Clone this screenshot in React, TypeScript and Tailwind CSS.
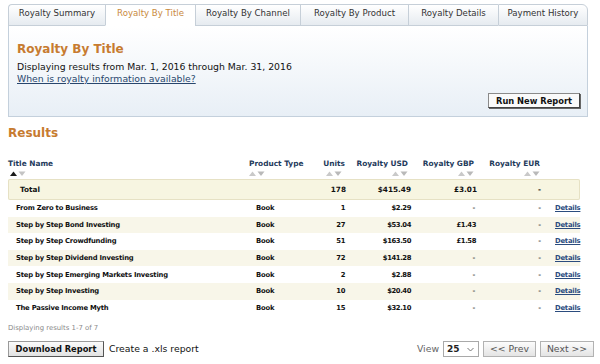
import React from "react";

const COLS = "grid grid-cols-[241px_66px_32px_64px_66px_65px_38px]";

function Arrows({ active }: { active?: boolean }) {
  return (
    <svg width="16" height="5" viewBox="0 0 16 5" className="block">
      <path d="M0 5L3.5 0.5L7 5Z" fill={active ? "#1a1a1a" : "#c9c9c9"} />
      <path d="M8.5 0.5H15.5L12 5Z" fill={active ? "#c4c4c4" : "#b9b9b9"} />
    </svg>
  );
}

const tabs = [
  { label: "Royalty Summary", w: "w-[97px]" },
  { label: "Royalty By Title", w: "w-[90px]", active: true },
  { label: "Royalty By Channel", w: "w-[105px]" },
  { label: "Royalty By Product", w: "w-[108px]" },
  { label: "Royalty Details", w: "w-[90px]" },
  { label: "Payment History", w: "w-[90px]" },
];

const rows = [
  ["From Zero to Business", "Book", "1", "$2.29", "-", "-"],
  ["Step by Step Bond Investing", "Book", "27", "$53.04", "£1.43", "-"],
  ["Step by Step Crowdfunding", "Book", "51", "$163.50", "£1.58", "-"],
  ["Step by Step Dividend Investing", "Book", "72", "$141.28", "-", "-"],
  ["Step by Step Emerging Markets Investing", "Book", "2", "$2.88", "-", "-"],
  ["Step by Step Investing", "Book", "10", "$20.40", "-", "-"],
  ["The Passive Income Myth", "Book", "15", "$32.10", "-", "-"],
];

export default function App() {
  return (
    <div className="w-[600px] h-[364px] overflow-hidden bg-white font-['DejaVu_Sans',Verdana,sans-serif] text-[#111]">
      {/* Tabs */}
      <div className="flex ml-[8px] mt-[4px] h-[22px]">
        {tabs.map((t, i) => (
          <div
            key={t.label}
            className={[
              t.w,
              "flex justify-center pt-[3px] text-[8.6px] leading-[10px] border-t border-l border-[#c6cfd8]",
              i === 0 ? "rounded-tl-[4px]" : "",
              i === tabs.length - 1 ? "border-r rounded-tr-[6px]" : "",
              t.active
                ? "bg-white text-[#c98a3d] border-b border-b-white"
                : "bg-gradient-to-b from-white to-[#e6ebf0] text-[#333] border-b",
            ].join(" ")}
          >
            {t.label}
          </div>
        ))}
      </div>

      {/* Panel */}
      <div className="ml-[8px] w-[580px] h-[91px] border-l border-r border-b border-[#c4d0dc] bg-gradient-to-b from-white to-[#e8eff6] flex flex-col pl-[8px]">
        <div className="mt-[16px] text-[12px] leading-[14px] font-bold text-[#c77b30]">Royalty By Title</div>
        <div className="mt-[5px] text-[9.3px] leading-[12px]">
          Displaying results from Mar. 1, 2016 through Mar. 31, 2016
        </div>
        <div className="text-[9.3px] leading-[12px]">
          <span className="underline text-[#28466d]">When is royalty information available?</span>
        </div>
        <div className="self-end mr-[7px] mt-[8px] w-[92px] h-[15px] border border-[#8a8a8a] border-r-[#444] border-b-[#444] shadow-[1px_1px_0_#666] bg-[#fafafa] flex items-center justify-center text-[8.3px] leading-[10px] font-bold">
          Run New Report
        </div>
      </div>

      {/* Results */}
      <div className="ml-[8px] mt-[9px] text-[12px] leading-[14px] font-bold text-[#c77b30]">Results</div>

      <div className="ml-[8px] w-[572px] mt-[19px]">
        {/* Header */}
        <div className={`${COLS} text-[7.4px] leading-[9px] font-bold text-[#1f3b5c]`}>
          <div className="flex flex-col items-start">
            <span>Title Name</span>
            <span className="mt-[3px] ml-[2px]"><Arrows active /></span>
          </div>
          <div className="flex flex-col items-start">
            <span>Product Type</span>
            <span className="mt-[3px]"><Arrows /></span>
          </div>
          <div className="flex flex-col items-end pr-[2px] whitespace-nowrap">
            <span>Units</span>
            <span className="mt-[3px] mr-[3px]"><Arrows /></span>
          </div>
          <div className="flex flex-col items-end pr-[3px] whitespace-nowrap">
            <span>Royalty USD</span>
            <span className="mt-[3px]"><Arrows /></span>
          </div>
          <div className="flex flex-col items-end pr-[3px] whitespace-nowrap">
            <span>Royalty GBP</span>
            <span className="mt-[3px]"><Arrows /></span>
          </div>
          <div className="flex flex-col items-end pr-[2px] whitespace-nowrap">
            <span>Royalty EUR</span>
            <span className="mt-[3px]"><Arrows /></span>
          </div>
          <div />
        </div>

        {/* Total */}
        <div className={`${COLS} mt-[3px] h-[21px] items-center bg-[#f7f5e1] rounded-[2px] shadow-[inset_0_0_0_1px_#e6e1c4] text-[7.3px] leading-[9px] font-bold`}>
          <div className="pl-[12px]">Total</div>
          <div />
          <div className="text-right pr-[1px]">178</div>
          <div className="text-right">$415.49</div>
          <div className="text-right">£3.01</div>
          <div className="text-right pr-[1px]">-</div>
          <div />
        </div>

        {/* Rows */}
        {rows.map((r, i) => (
          <div
            key={r[0]}
            className={`${COLS} h-[16.6px] items-center text-[6.8px] leading-[8px] font-bold ${i % 2 === 1 ? "bg-[#f8f6e9]" : ""}`}
          >
            <div className="pl-[8px] whitespace-nowrap tracking-[-0.2px]">{r[0]}</div>
            <div className="pl-[7px] tracking-[-0.2px]">{r[1]}</div>
            <div className="text-right pr-[2px] tracking-[-0.4px]">{r[2]}</div>
            <div className="text-right tracking-[-0.4px]">{r[3]}</div>
            <div className={`text-right tracking-[-0.4px] ${r[4] === "-" ? "text-[#555] pr-[2px]" : "pr-[1px]"}`}>{r[4]}</div>
            <div className="text-right pr-[1px] text-[#555]">{r[5]}</div>
            <div className="pl-[13px] tracking-[-0.2px]">
              <span className="underline text-[#2b4c7e]">Details</span>
            </div>
          </div>
        ))}
      </div>

      {/* Footer */}
      <div className="ml-[8px] mt-[8px] text-[6.9px] leading-[8px] text-[#8a8a8a]">Displaying results 1-7 of 7</div>

      <div className="flex items-center mt-[9px] ml-[8px] mr-[6px] h-[16px]">
        <div className="w-[96px] h-[16px] border border-[#9a9a9a] border-r-[#555] border-b-[#555] bg-gradient-to-b from-[#fbfbfb] to-[#e2e2e2] flex items-center justify-center text-[8.3px] leading-[10px] font-bold">
          Download Report
        </div>
        <div className="ml-[5px] text-[9.3px] leading-[12px]">Create a .xls report</div>
        <div className="flex-1" />
        <div className="text-[9.3px] leading-[12px] text-[#666]">View</div>
        <div className="ml-[4px] w-[36px] h-[16px] border border-[#a9a9a9] bg-white flex items-center justify-between pl-[3px] pr-[4px]">
          <span className="text-[9px] leading-[11px] font-bold text-[#222]">25</span>
          <svg width="7" height="5" viewBox="0 0 7 5"><path d="M0.5 1L3.5 4L6.5 1" fill="none" stroke="#777" strokeWidth="1" /></svg>
        </div>
        <div className="ml-[4px] w-[53px] h-[16px] border border-[#b2b2b2] bg-gradient-to-b from-[#fcfcfc] to-[#e4e4e4] flex items-center justify-center text-[9.3px] leading-[12px] text-[#555]">
          &lt;&lt; Prev
        </div>
        <div className="ml-[4px] w-[54px] h-[16px] border border-[#b2b2b2] bg-gradient-to-b from-[#fcfcfc] to-[#e4e4e4] flex items-center justify-center text-[9.3px] leading-[12px] text-[#555]">
          Next &gt;&gt;
        </div>
      </div>
    </div>
  );
}
